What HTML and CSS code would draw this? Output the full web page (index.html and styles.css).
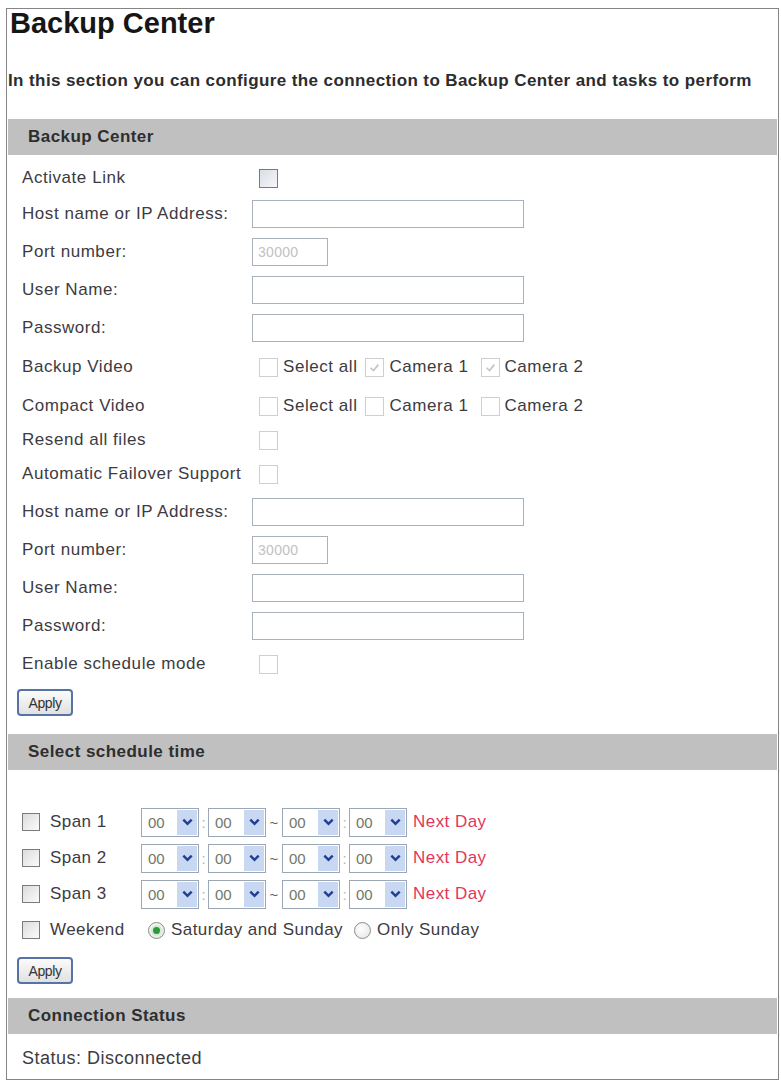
FILE: index.html
```html
<!DOCTYPE html>
<html>
<head>
<meta charset="utf-8">
<title>Backup Center</title>
<link rel="stylesheet" href="styles.css">
</head>
<body>
<div class="page">
  <h1 class="title">Backup Center</h1>
  <p class="intro">In this section you can configure the connection to Backup Center and tasks to perform</p>

  <div class="bar">Backup Center</div>
  <div class="form">
    <div class="row h34"><span class="label">Activate Link</span><span class="cb on"></span></div>
    <div class="row"><span class="label">Host name or IP Address:</span><input class="txt" type="text"></div>
    <div class="row"><span class="label">Port number:</span><input class="txt port" type="text" value="30000" disabled></div>
    <div class="row"><span class="label">User Name:</span><input class="txt" type="text"></div>
    <div class="row"><span class="label">Password:</span><input class="txt" type="password"></div>
    <div class="row h40"><span class="label">Backup Video</span>
      <span class="cbg">
        <span class="cb"></span><span class="opt">Select all</span>
        <span class="cb"><svg viewBox="0 0 10 10" class="tick"><path d="M2 5.2 L4.2 7.3 L8 2.8"/></svg></span><span class="opt">Camera 1</span>
        <span class="cb"><svg viewBox="0 0 10 10" class="tick"><path d="M2 5.2 L4.2 7.3 L8 2.8"/></svg></span><span class="opt">Camera 2</span>
      </span>
    </div>
    <div class="row"><span class="label">Compact Video</span>
      <span class="cbg">
        <span class="cb"></span><span class="opt">Select all</span>
        <span class="cb"></span><span class="opt">Camera 1</span>
        <span class="cb"></span><span class="opt">Camera 2</span>
      </span>
    </div>
    <div class="row h30"><span class="label">Resend all files</span><span class="cb"></span></div>
    <div class="row"><span class="label">Automatic Failover Support</span><span class="cb"></span></div>
    <div class="row"><span class="label">Host name or IP Address:</span><input class="txt" type="text"></div>
    <div class="row"><span class="label">Port number:</span><input class="txt port" type="text" value="30000" disabled></div>
    <div class="row"><span class="label">User Name:</span><input class="txt" type="text"></div>
    <div class="row"><span class="label">Password:</span><input class="txt" type="password"></div>
    <div class="row"><span class="label">Enable schedule mode</span><span class="cb"></span></div>
  </div>
  <div class="apply-wrap first"><button class="apply" type="button">Apply</button></div>

  <div class="bar bar2">Select schedule time</div>
  <div class="schedule">
    <div class="srow">
      <span class="lead"><span class="cb2"></span><span>Span 1</span></span>
      <span class="sel"><span class="v">00</span><span class="dd"><svg viewBox="0 0 10 7"><path d="M1.2 1.3 L5 5.2 L8.8 1.3"/></svg></span></span>
      <span class="sep colon">:</span>
      <span class="sel"><span class="v">00</span><span class="dd"><svg viewBox="0 0 10 7"><path d="M1.2 1.3 L5 5.2 L8.8 1.3"/></svg></span></span>
      <span class="sep tilde">~</span>
      <span class="sel"><span class="v">00</span><span class="dd"><svg viewBox="0 0 10 7"><path d="M1.2 1.3 L5 5.2 L8.8 1.3"/></svg></span></span>
      <span class="sep colon">:</span>
      <span class="sel"><span class="v">00</span><span class="dd"><svg viewBox="0 0 10 7"><path d="M1.2 1.3 L5 5.2 L8.8 1.3"/></svg></span></span>
      <span class="next">Next Day</span>
    </div>
    <div class="srow">
      <span class="lead"><span class="cb2"></span><span>Span 2</span></span>
      <span class="sel"><span class="v">00</span><span class="dd"><svg viewBox="0 0 10 7"><path d="M1.2 1.3 L5 5.2 L8.8 1.3"/></svg></span></span>
      <span class="sep colon">:</span>
      <span class="sel"><span class="v">00</span><span class="dd"><svg viewBox="0 0 10 7"><path d="M1.2 1.3 L5 5.2 L8.8 1.3"/></svg></span></span>
      <span class="sep tilde">~</span>
      <span class="sel"><span class="v">00</span><span class="dd"><svg viewBox="0 0 10 7"><path d="M1.2 1.3 L5 5.2 L8.8 1.3"/></svg></span></span>
      <span class="sep colon">:</span>
      <span class="sel"><span class="v">00</span><span class="dd"><svg viewBox="0 0 10 7"><path d="M1.2 1.3 L5 5.2 L8.8 1.3"/></svg></span></span>
      <span class="next">Next Day</span>
    </div>
    <div class="srow">
      <span class="lead"><span class="cb2"></span><span>Span 3</span></span>
      <span class="sel"><span class="v">00</span><span class="dd"><svg viewBox="0 0 10 7"><path d="M1.2 1.3 L5 5.2 L8.8 1.3"/></svg></span></span>
      <span class="sep colon">:</span>
      <span class="sel"><span class="v">00</span><span class="dd"><svg viewBox="0 0 10 7"><path d="M1.2 1.3 L5 5.2 L8.8 1.3"/></svg></span></span>
      <span class="sep tilde">~</span>
      <span class="sel"><span class="v">00</span><span class="dd"><svg viewBox="0 0 10 7"><path d="M1.2 1.3 L5 5.2 L8.8 1.3"/></svg></span></span>
      <span class="sep colon">:</span>
      <span class="sel"><span class="v">00</span><span class="dd"><svg viewBox="0 0 10 7"><path d="M1.2 1.3 L5 5.2 L8.8 1.3"/></svg></span></span>
      <span class="next">Next Day</span>
    </div>
    <div class="srow">
      <span class="lead"><span class="cb2"></span><span>Weekend</span></span>
      <span class="radio on"></span><span class="ropt">Saturday and Sunday</span>
      <span class="radio"></span><span class="ropt">Only Sunday</span>
    </div>
  </div>
  <div class="apply-wrap second"><button class="apply" type="button">Apply</button></div>

  <div class="bar bar3">Connection Status</div>
  <div class="status">Status: Disconnected</div>
</div>
</body>
</html>
```
FILE: styles.css
```css
* { box-sizing: border-box; }

body {
  margin: 0;
  background: #ffffff;
  font-family: "Liberation Sans", Arial, sans-serif;
  color: #3d3b3f;
}

.page {
  margin: 8px 0 0 6px;
  width: 773px;
  height: 1072px;
  border: 1px solid #858585;
}

.title {
  margin: 0 0 0 3px;
  font-size: 29px;
  line-height: 28px;
  font-weight: bold;
  color: #161616;
}

.intro {
  margin: 34px 0 0 1px;
  font-size: 17px;
  line-height: 20px;
  font-weight: bold;
  letter-spacing: 0.4px;
  white-space: nowrap;
  color: #2c2c2e;
}

.bar {
  margin: 28px 1px 0;
  height: 36px;
  background: #c0c0c0;
  display: flex;
  align-items: center;
  padding-left: 20px;
  font-size: 17px;
  font-weight: bold;
  letter-spacing: 0.45px;
  color: #2e2e2e;
}

.bar2 { margin-top: 18px; }
.bar3 { margin-top: 14px; }

.form { padding-top: 6px; }

.row {
  display: flex;
  align-items: center;
  height: 38px;
  padding-left: 15px;
}

.row.h34 { height: 34px; }
.row.h40 { height: 40px; }
.row.h30 { height: 30px; }

.label {
  width: 230px;
  font-size: 17px;
  letter-spacing: 0.55px;
  white-space: nowrap;
}

.txt {
  width: 272px;
  height: 28px;
  margin: 0;
  padding: 0 5px;
  border: 1px solid #a9b1bb;
  background: #ffffff;
  font-family: "Liberation Sans", Arial, sans-serif;
  font-size: 14px;
  outline: none;
}

.txt.port {
  width: 76px;
  color: #c2c2c2;
  -webkit-text-fill-color: #c2c2c2;
  letter-spacing: 0.3px;
  opacity: 1;
}

.cb {
  width: 19px;
  height: 19px;
  margin-left: 7px;
  border: 1px solid #cfcfcf;
  background: #ffffff;
  display: inline-flex;
  align-items: center;
  justify-content: center;
  flex: none;
}

.cb.on {
  border-color: #6f7c8e;
  background: linear-gradient(135deg, #d9dee6, #f6f7f9);
}

.tick {
  width: 13px;
  height: 13px;
  fill: none;
  stroke: #c4c4c4;
  stroke-width: 1.3;
}

.cbg {
  display: flex;
  align-items: center;
}

.cbg .cb + .opt { margin-left: 5px; }
.cbg .opt + .cb { margin-left: 8px; }
.cbg .opt:nth-child(4) + .cb { margin-left: 12px; }

.opt {
  font-size: 17px;
  letter-spacing: 0.55px;
  white-space: nowrap;
}

.apply-wrap { padding-left: 10px; }
.apply-wrap.first { margin-top: 6px; }
.apply-wrap.second { margin-top: 9px; }

.apply {
  width: 56px;
  height: 27px;
  margin: 0;
  padding: 0;
  border: 2px solid #5673a6;
  border-radius: 4px;
  background: linear-gradient(#fbfbfb, #e1e1e1);
  font-family: "Liberation Sans", Arial, sans-serif;
  font-size: 14px;
  letter-spacing: -0.4px;
  color: #333333;
}

.schedule { padding-top: 34px; }

.srow {
  display: flex;
  align-items: center;
  height: 36px;
  padding-left: 15px;
  font-size: 17px;
  letter-spacing: 0.45px;
}

.lead {
  width: 119px;
  display: flex;
  align-items: center;
  gap: 10px;
  flex: none;
}

.cb2 {
  width: 18px;
  height: 18px;
  border: 1px solid #7b7b7b;
  background: linear-gradient(135deg, #dcdcdc, #fbfbfb);
  flex: none;
}

.sel {
  width: 58px;
  height: 29px;
  border: 1px solid #9ba7b5;
  background: #ffffff;
  display: flex;
  flex: none;
}

.sel .v {
  flex: 1;
  padding-left: 6px;
  font-size: 15px;
  line-height: 27px;
  letter-spacing: 0;
  color: #6f786a;
}

.sel .dd {
  width: 20px;
  margin: 1px;
  background: #c9d8f2;
  display: flex;
  align-items: center;
  justify-content: center;
}

.sel .dd svg {
  width: 11px;
  height: 8px;
  fill: none;
  stroke: #213f92;
  stroke-width: 2.2;
}

.sep {
  text-align: center;
  flex: none;
  letter-spacing: 0;
}

.sep.colon {
  width: 9px;
  color: #b5b5b5;
  font-size: 15px;
}

.sep.tilde {
  width: 16px;
  color: #5c5c5c;
  font-size: 15px;
}

.next {
  margin-left: 6px;
  color: #e2375a;
  white-space: nowrap;
}

.radio {
  width: 17px;
  height: 17px;
  margin-left: 7px;
  border-radius: 50%;
  border: 1px solid #8b8b8b;
  background: radial-gradient(circle at 40% 40%, #ffffff, #e2e2e2);
  display: inline-flex;
  align-items: center;
  justify-content: center;
  flex: none;
}

.radio.on::after {
  content: "";
  width: 7px;
  height: 7px;
  border-radius: 50%;
  background: #2f983f;
  box-shadow: 0 0 0 2px #cfeccf;
}

.ropt {
  margin-left: 6px;
  white-space: nowrap;
}

.ropt + .radio { margin-left: 11px; }

.status {
  margin-top: 14px;
  padding-left: 15px;
  font-size: 18px;
  line-height: 20px;
  letter-spacing: 0.5px;
}
```
